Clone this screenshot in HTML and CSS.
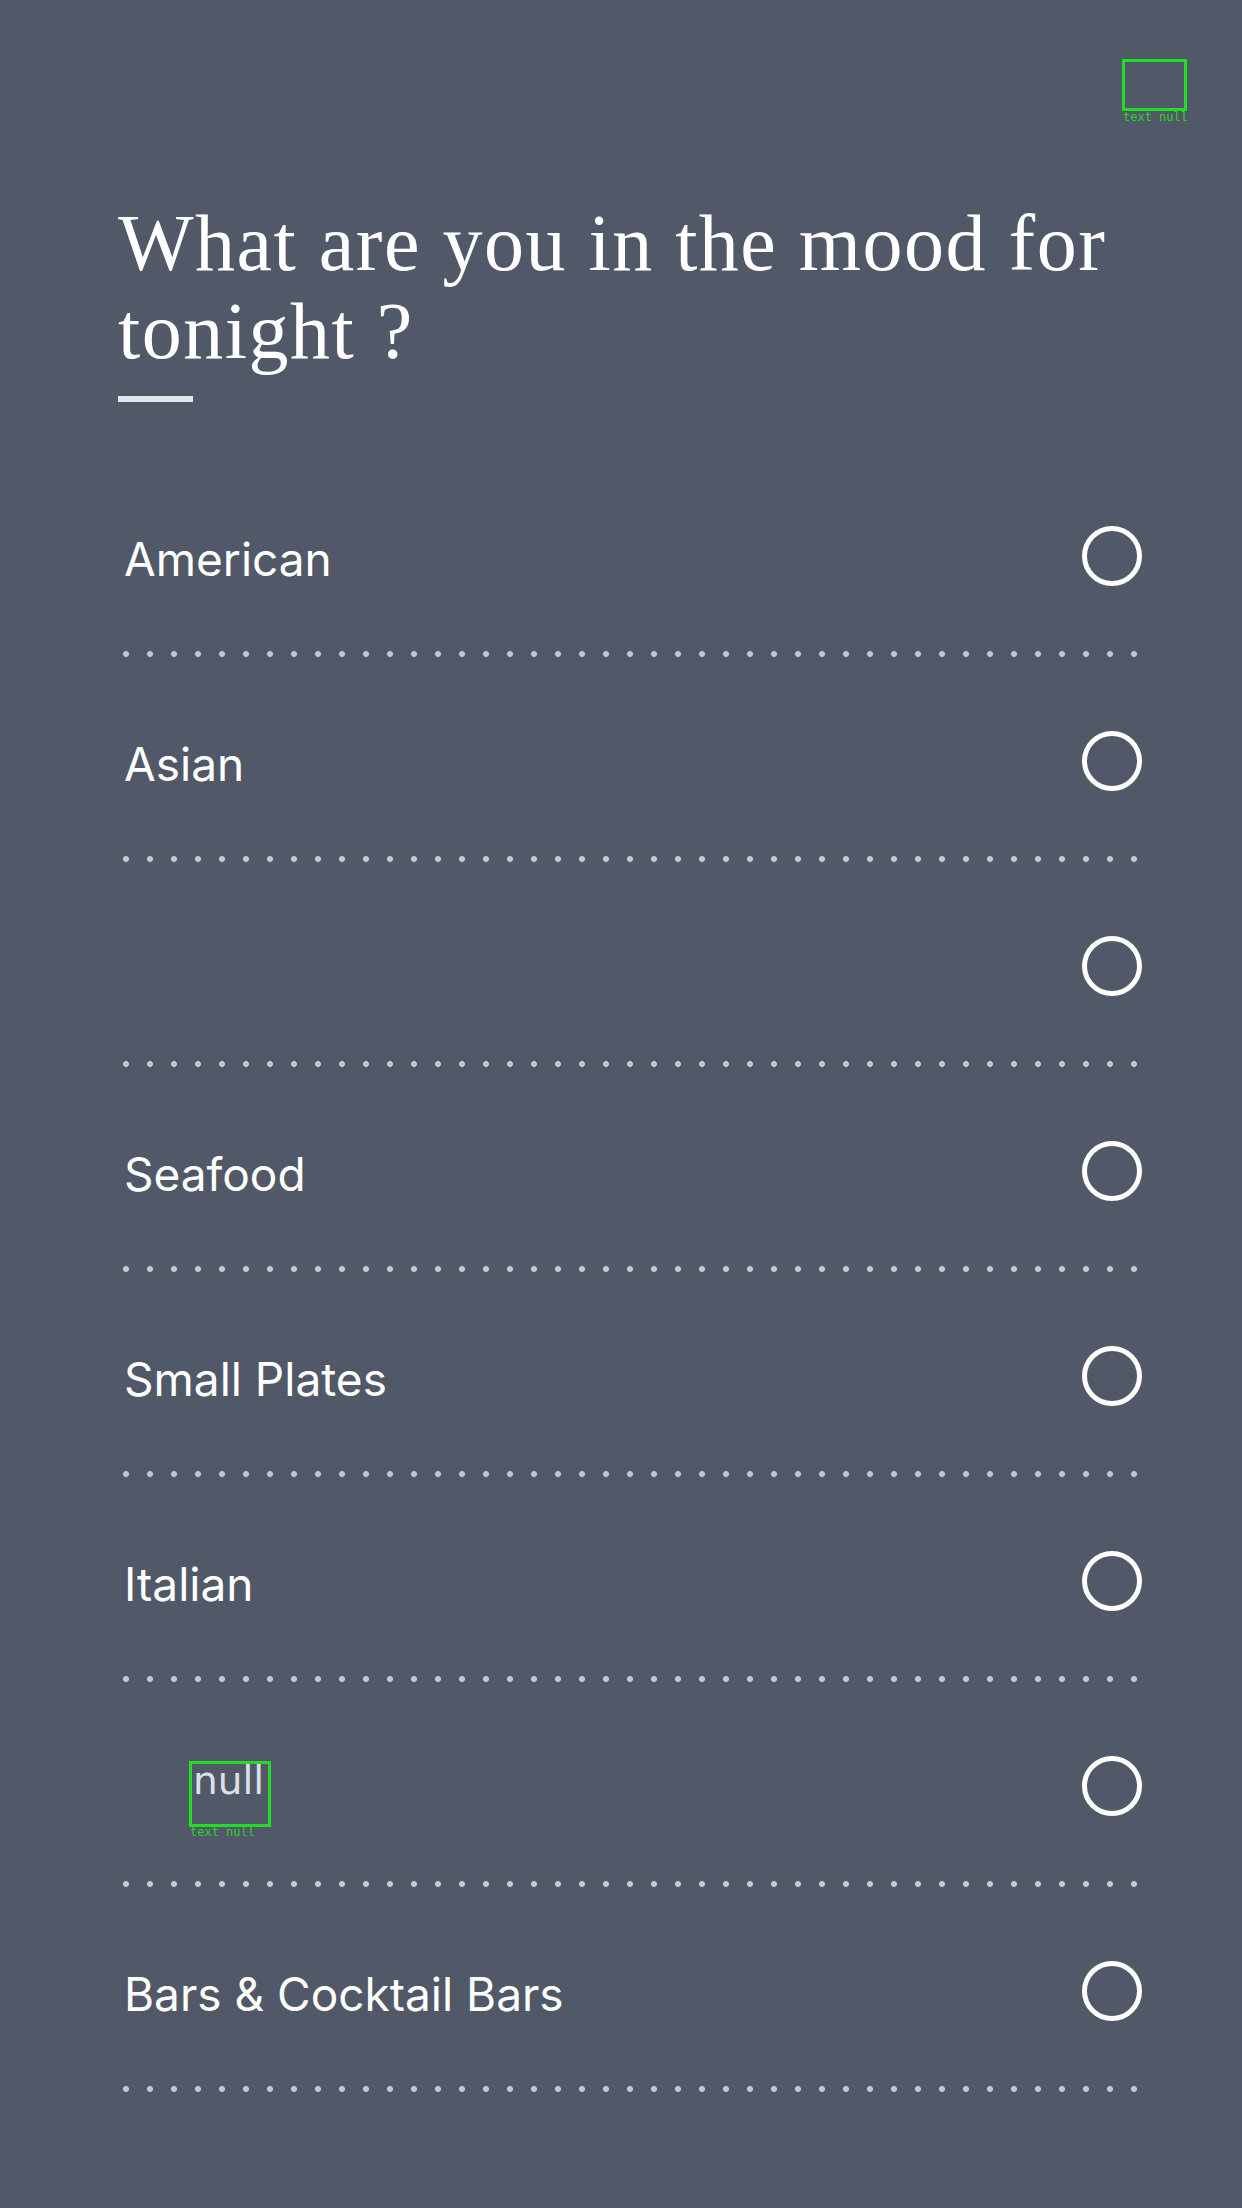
FILE: index.html
```html
<!DOCTYPE html>
<html lang="en">
<head>
<meta charset="utf-8">
<title>Mood</title>
<link rel="stylesheet" href="styles.css">
</head>
<body>
<div class="screen">
  <div class="annot annot-top"><span class="annot-label">text null</span></div>
  <header class="head">
    <h1 class="title">What are you in the mood for tonight ?</h1>
    <div class="title-bar"></div>
  </header>
  <ul class="options">
    <li class="option"><div class="option-row"><span class="option-label">American</span><span class="radio"></span></div><div class="dots"></div></li>
    <li class="option"><div class="option-row"><span class="option-label">Asian</span><span class="radio"></span></div><div class="dots"></div></li>
    <li class="option"><div class="option-row"><span class="option-label"></span><span class="radio"></span></div><div class="dots"></div></li>
    <li class="option"><div class="option-row"><span class="option-label">Seafood</span><span class="radio"></span></div><div class="dots"></div></li>
    <li class="option"><div class="option-row"><span class="option-label">Small Plates</span><span class="radio"></span></div><div class="dots"></div></li>
    <li class="option"><div class="option-row"><span class="option-label">Italian</span><span class="radio"></span></div><div class="dots"></div></li>
    <li class="option"><div class="option-row"><span class="option-null">null<span class="annot-label annot-label-null">text null</span></span><span class="radio"></span></div><div class="dots"></div></li>
    <li class="option"><div class="option-row"><span class="option-label">Bars &amp; Cocktail Bars</span><span class="radio"></span></div><div class="dots"></div></li>
  </ul>
</div>
</body>
</html>
```
FILE: styles.css
```css
html, body {
  margin: 0;
  padding: 0;
  background: #515867;
}
.screen {
  position: relative;
  width: 1242px;
  height: 2208px;
  box-sizing: border-box;
  padding: 199px 100px 0 118px;
  background: #515867;
  overflow: hidden;
}
.annot {
  position: absolute;
  box-sizing: border-box;
  border: 3px solid #22dd22;
}
.annot-top {
  left: 1122px;
  top: 59px;
  width: 65px;
  height: 52px;
}
.annot-label {
  position: absolute;
  left: 0;
  top: 49px;
  font-family: "DejaVu Sans Mono", monospace;
  font-size: 12px;
  line-height: 12px;
  color: #2bd42b;
  white-space: nowrap;
}
.annot-top .annot-label {
  left: -2px;
}
.head {
  margin: 0;
}
.title {
  margin: 0;
  max-width: 1060px;
  font-family: "Liberation Serif", "DejaVu Serif", serif;
  font-weight: 400;
  font-size: 80px;
  line-height: 88px;
  letter-spacing: 1.5px;
  color: #ffffff;
}
.title-bar {
  margin-top: 21px;
  width: 75px;
  height: 6px;
  background: #e6e7ec;
}
.options {
  list-style: none;
  margin: 50px 0 0 6px;
  padding: 0;
}
.option-row {
  display: flex;
  align-items: center;
  justify-content: space-between;
  height: 60px;
  padding: 74px 0 65px;
}
.option-label {
  font-family: Inter, "Liberation Sans", sans-serif;
  font-size: 46px;
  line-height: 56px;
  margin-top: 5px;
  color: #ffffff;
}
.option-null {
  position: relative;
  align-self: flex-start;
  box-sizing: border-box;
  margin: 5px 0 0 65px;
  width: 82px;
  height: 66px;
  padding-left: 4px;
  box-shadow: inset 0 0 0 3px #22dd22;
  font-family: "DejaVu Sans", sans-serif;
  font-size: 39px;
  line-height: 40px;
  color: #dde0ea;
}
.annot-label-null {
  top: 65px;
  left: 1px;
}
.radio {
  flex: none;
  margin-left: auto;
  width: 60px;
  height: 60px;
  box-sizing: border-box;
  border: 5px solid #ffffff;
  border-radius: 50%;
}
.dots {
  margin-left: -1px;
  width: 1014px;
  height: 6px;
  background-image: radial-gradient(circle at 3px 3px, #c4c7d1 2.6px, rgba(196, 199, 209, 0) 3.3px);
  background-size: 24px 6px;
  background-repeat: repeat-x;
}
```
